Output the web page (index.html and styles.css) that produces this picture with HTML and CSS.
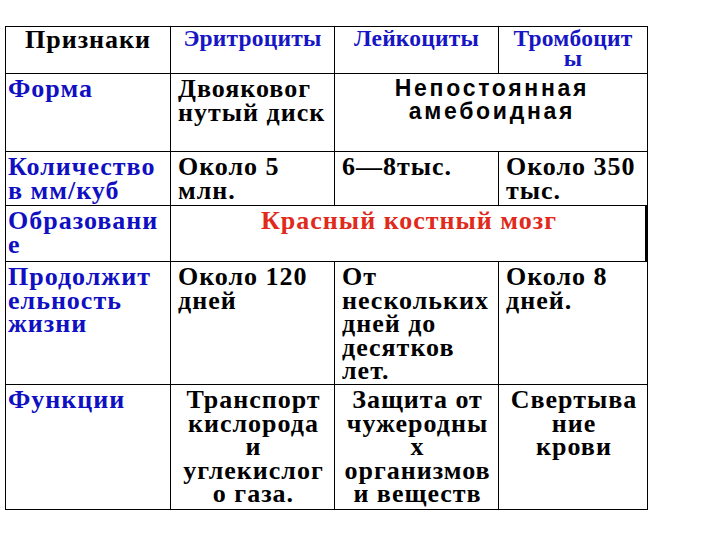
FILE: index.html
```html
<!DOCTYPE html>
<html lang="ru">
<head>
<meta charset="utf-8">
<title>Клетки крови</title>
<link rel="stylesheet" href="styles.css">
</head>
<body>
<div class="sheet">
  <div class="cell hd-main first-col top-row">Признаки</div>
  <div class="cell hd top-row">Эритроциты</div>
  <div class="cell hd top-row">Лейкоциты</div>
  <div class="cell hd hd-two top-row">Тромбоцит<br>ы</div>

  <div class="cell lbl first-col">Форма</div>
  <div class="cell val">Двояковог<br>нутый диск</div>
  <div class="cell sans span2">Непостоянная<br>амебоидная</div>

  <div class="cell lbl first-col">Количество<br>в мм/куб</div>
  <div class="cell val">Около 5<br>млн.</div>
  <div class="cell val">6—8тыс.</div>
  <div class="cell val">Около 350<br>тыс.</div>

  <div class="cell lbl first-col">Образовани<br>е</div>
  <div class="cell red span3">Красный костный мозг</div>

  <div class="cell lbl first-col">Продолжит<br>ельность<br>жизни</div>
  <div class="cell val">Около 120<br>дней</div>
  <div class="cell val">От<br>нескольких<br>дней до<br>десятков<br>лет.</div>
  <div class="cell val">Около 8<br>дней.</div>

  <div class="cell lbl first-col">Функции</div>
  <div class="cell val mid">Транспорт<br>кислорода<br>и<br>углекислог<br>о газа.</div>
  <div class="cell val mid">Защита от<br>чужеродны<br>х<br>организмов<br>и веществ</div>
  <div class="cell val mid">Свертыва<br>ние<br>крови</div>
</div>
</body>
</html>
```
FILE: styles.css
```css
html, body {
  margin: 0;
  padding: 0;
  background: #ffffff;
}

.sheet {
  display: grid;
  grid-template-columns: 166px 164px 164px 149px;
  grid-template-rows: 48px 78px 54px 56px 123px 125px;
  margin: 26px 0 0 5px;
  width: 643px;
}

.cell {
  box-sizing: border-box;
  border-right: 1px solid #000;
  border-bottom: 1px solid #000;
  padding: 3px 0 0 7px;
  white-space: nowrap;
  overflow: hidden;
  font-family: "Liberation Serif", "Times New Roman", serif;
  font-weight: bold;
  font-size: 26px;
  letter-spacing: 1px;
  line-height: 23.5px;
  color: #000;
}

.first-col {
  border-left: 1px solid #000;
  padding-left: 2px;
}

.top-row {
  border-top: 1px solid #000;
}

.hd-main {
  text-align: center;
  padding-top: 1px;
  padding-left: 0;
}

.hd {
  text-align: center;
  font-size: 23.5px;
  letter-spacing: 0.2px;
  line-height: 20px;
  color: #1616c4;
  padding-top: 1px;
  padding-left: 0;
}

.lbl {
  color: #1010c2;
}

.sans {
  font-family: "Liberation Sans", Arial, sans-serif;
  font-size: 23px;
  letter-spacing: 2.7px;
  line-height: 23px;
  text-align: center;
  padding-left: 2px;
}

.span2 {
  grid-column: span 2;
}

.span3 {
  grid-column: span 3;
  border-right-width: 3px;
}

.red {
  color: #e02a1c;
  text-align: center;
  padding-left: 2px;
}

.mid {
  text-align: center;
  padding-left: 2px;
}
```
